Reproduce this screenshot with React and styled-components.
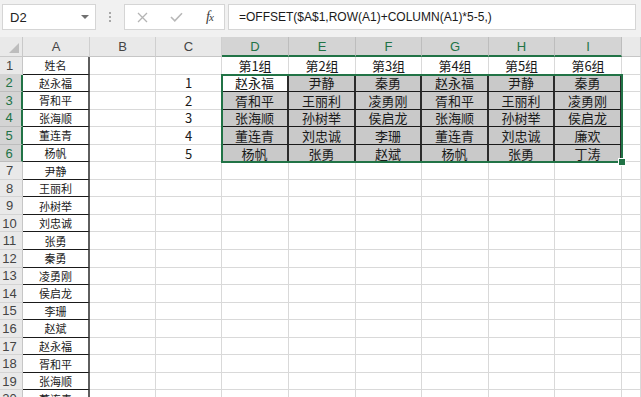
import React from "react";
import styled, { createGlobalStyle, css } from "styled-components";

const GlobalStyle = createGlobalStyle`
  html, body {
    margin: 0;
    padding: 0;
    background: #fff;
  }
  body {
    font-family: "Noto Sans CJK SC", sans-serif;
    overflow: hidden;
  }
`;

const GREEN = "#217346";

const Page = styled.div`
  width: 641px;
  height: 397px;
  display: flex;
  flex-direction: column;
  overflow: hidden;
  background: #fff;
`;

const FormulaBar = styled.div`
  height: 37px;
  box-sizing: border-box;
  padding: 4px 5px 7px 2px;
  display: flex;
  align-items: stretch;
  background: #f1f1f1;
`;

const NameBox = styled.div`
  width: 94px;
  box-sizing: border-box;
  background: #fff;
  border: 1px solid #d5d5d5;
  display: flex;
  align-items: center;
  justify-content: space-between;
  padding: 0 6px 0 7px;
  font: 13px "Liberation Sans", sans-serif;
  color: #222;
`;

const Caret = styled.span`
  width: 0;
  height: 0;
  border-left: 4px solid transparent;
  border-right: 4px solid transparent;
  border-top: 4px solid #707070;
`;

const Grip = styled.div`
  width: 28px;
  display: flex;
  flex-direction: column;
  align-items: center;
  justify-content: center;
  gap: 2px;
  span {
    width: 2px;
    height: 2px;
    background: #a8a8a8;
  }
`;

const ButtonBox = styled.div`
  width: 101px;
  margin-right: 3px;
  box-sizing: border-box;
  background: #fff;
  border: 1px solid #d5d5d5;
  display: grid;
  grid-template-columns: 34px 34px 33px;
  align-items: center;
  justify-items: center;
`;

const Fx = styled.span`
  font-family: "Liberation Serif", serif;
  font-style: italic;
  font-size: 14px;
  color: #3a3a3a;
  letter-spacing: -1px;
  small {
    font-size: 11px;
  }
`;

const FormulaInput = styled.div`
  flex: 1;
  box-sizing: border-box;
  background: #fff;
  border: 1px solid #d5d5d5;
  display: flex;
  align-items: center;
  padding-left: 10px;
  font: 12px "Liberation Sans", sans-serif;
  color: #1a1a1a;
`;

const Sheet = styled.div`
  flex: 1;
  position: relative;
  display: grid;
  grid-template-columns: 23px 67px 66px 66px 67px 67px 66px 67px 66px 67px 1fr;
  grid-template-rows: 20px repeat(20, 17.56px);
  overflow: hidden;
`;

const Corner = styled.div`
  box-sizing: border-box;
  background: #e9e9e9;
  border-right: 1px solid #c9c9c9;
  border-bottom: 1px solid #c9c9c9;
  display: flex;
  align-items: flex-end;
  justify-content: flex-end;
  padding: 0 3px 3px 0;
  &::after {
    content: "";
    width: 0;
    height: 0;
    border-left: 10px solid transparent;
    border-bottom: 10px solid #bdbdbd;
  }
`;

const ColHeader = styled.div`
  box-sizing: border-box;
  display: flex;
  align-items: center;
  justify-content: center;
  font: 13px "Liberation Sans", sans-serif;
  color: #444;
  background: #e9e9e9;
  border-right: 1px solid #cfcfcf;
  border-bottom: 1px solid #c6c6c6;
  ${(p) =>
    p.$active &&
    css`
      background: #d4d4d4;
      color: ${GREEN};
      border-right-color: #bdbdbd;
      border-bottom: 2px solid ${GREEN};
    `}
`;

const RowHeader = styled.div`
  box-sizing: border-box;
  display: flex;
  align-items: center;
  justify-content: center;
  padding-right: 3px;
  font: 13px "Liberation Sans", sans-serif;
  color: #444;
  background: #e9e9e9;
  border-right: 1px solid #c6c6c6;
  border-bottom: 1px solid #d4d4d4;
  ${(p) =>
    p.$active &&
    css`
      background: #d4d4d4;
      color: ${GREEN};
      border-right: 2px solid ${GREEN};
      border-bottom-color: #bdbdbd;
    `}
`;

const Cell = styled.div`
  box-sizing: border-box;
  display: flex;
  align-items: center;
  justify-content: center;
  white-space: nowrap;
  overflow: hidden;
  font-family: "Noto Sans CJK SC", sans-serif;
  font-size: 13px;
  color: #1a1a1a;
  background: #fff;
  border-right: 1px solid #d9d9d9;
  border-bottom: 1px solid #d9d9d9;
  ${(p) =>
    p.$kind === "name" &&
    css`
      font-size: 11px;
      border-right: 2px solid #5e5e5e;
      border-bottom: 1px solid #1a1a1a;
    `}
  ${(p) =>
    p.$kind === "data" &&
    css`
      background: ${p.$current ? "#fff" : "#c9c9c9"};
      border-right: 2px solid #2b2b2b;
      border-bottom: 1px solid #1a1a1a;
    `}
`;

/* absolutely positioned grid child: its containing block is the grid area D2:I6 */
const Selection = styled.div`
  position: absolute;
  grid-column: 5 / 11;
  grid-row: 3 / 8;
  top: -1px;
  left: -1px;
  right: -1px;
  bottom: -1px;
  border: 2px solid ${GREEN};
  pointer-events: none;
  z-index: 2;
  &::after {
    content: "";
    position: absolute;
    right: -5px;
    bottom: -5px;
    width: 6px;
    height: 6px;
    background: ${GREEN};
    border: 1px solid #fff;
  }
`;

const columns = ["A", "B", "C", "D", "E", "F", "G", "H", "I", ""];

const names = [
  "姓名", "赵永福", "胥和平", "张海顺", "董连青", "杨帆", "尹静", "王丽利",
  "孙树举", "刘忠诚", "张勇", "秦勇", "凌勇刚", "侯启龙", "李珊", "赵斌",
  "赵永福", "胥和平", "张海顺", "董连青",
];

const groups = [
  ["赵永福", "尹静", "秦勇", "赵永福", "尹静", "秦勇"],
  ["胥和平", "王丽利", "凌勇刚", "胥和平", "王丽利", "凌勇刚"],
  ["张海顺", "孙树举", "侯启龙", "张海顺", "孙树举", "侯启龙"],
  ["董连青", "刘忠诚", "李珊", "董连青", "刘忠诚", "廉欢"],
  ["杨帆", "张勇", "赵斌", "杨帆", "张勇", "丁涛"],
];

const CrossIcon = () => (
  <svg width="11" height="11" viewBox="0 0 11 11">
    <path d="M1 1L10 10M10 1L1 10" stroke="#b4b4b4" strokeWidth="1.3" fill="none" />
  </svg>
);

const CheckIcon = () => (
  <svg width="13" height="10" viewBox="0 0 13 10">
    <path d="M1 5L4.8 8.8L12 1.2" stroke="#b8b8b8" strokeWidth="1.6" fill="none" />
  </svg>
);

const App = () => {
  const rows = names.map((name, i) => {
    const r = i + 1;
    const inBlock = r >= 2 && r <= 6;
    return (
      <React.Fragment key={r}>
        <RowHeader $active={inBlock}>{r}</RowHeader>
        <Cell $kind="name">{name}</Cell>
        <Cell />
        <Cell>{inBlock ? r - 1 : ""}</Cell>
        {[0, 1, 2, 3, 4, 5].map((c) => {
          if (r === 1) return <Cell key={c}>第{c + 1}组</Cell>;
          if (inBlock)
            return (
              <Cell key={c} $kind="data" $current={r === 2 && c === 0}>
                {groups[r - 2][c]}
              </Cell>
            );
          return <Cell key={c} />;
        })}
        <Cell />
      </React.Fragment>
    );
  });

  return (
    <Page>
      <GlobalStyle />
      <FormulaBar>
        <NameBox>
          D2
          <Caret />
        </NameBox>
        <Grip>
          <span />
          <span />
          <span />
        </Grip>
        <ButtonBox>
          <CrossIcon />
          <CheckIcon />
          <Fx>
            f<small>x</small>
          </Fx>
        </ButtonBox>
        <FormulaInput>=OFFSET($A$1,ROW(A1)+COLUMN(A1)*5-5,)</FormulaInput>
      </FormulaBar>
      <Sheet>
        <Corner />
        {columns.map((c, i) => (
          <ColHeader key={i} $active={i >= 3 && i <= 8}>
            {c}
          </ColHeader>
        ))}
        {rows}
        <Selection />
      </Sheet>
    </Page>
  );
};

export default App;
